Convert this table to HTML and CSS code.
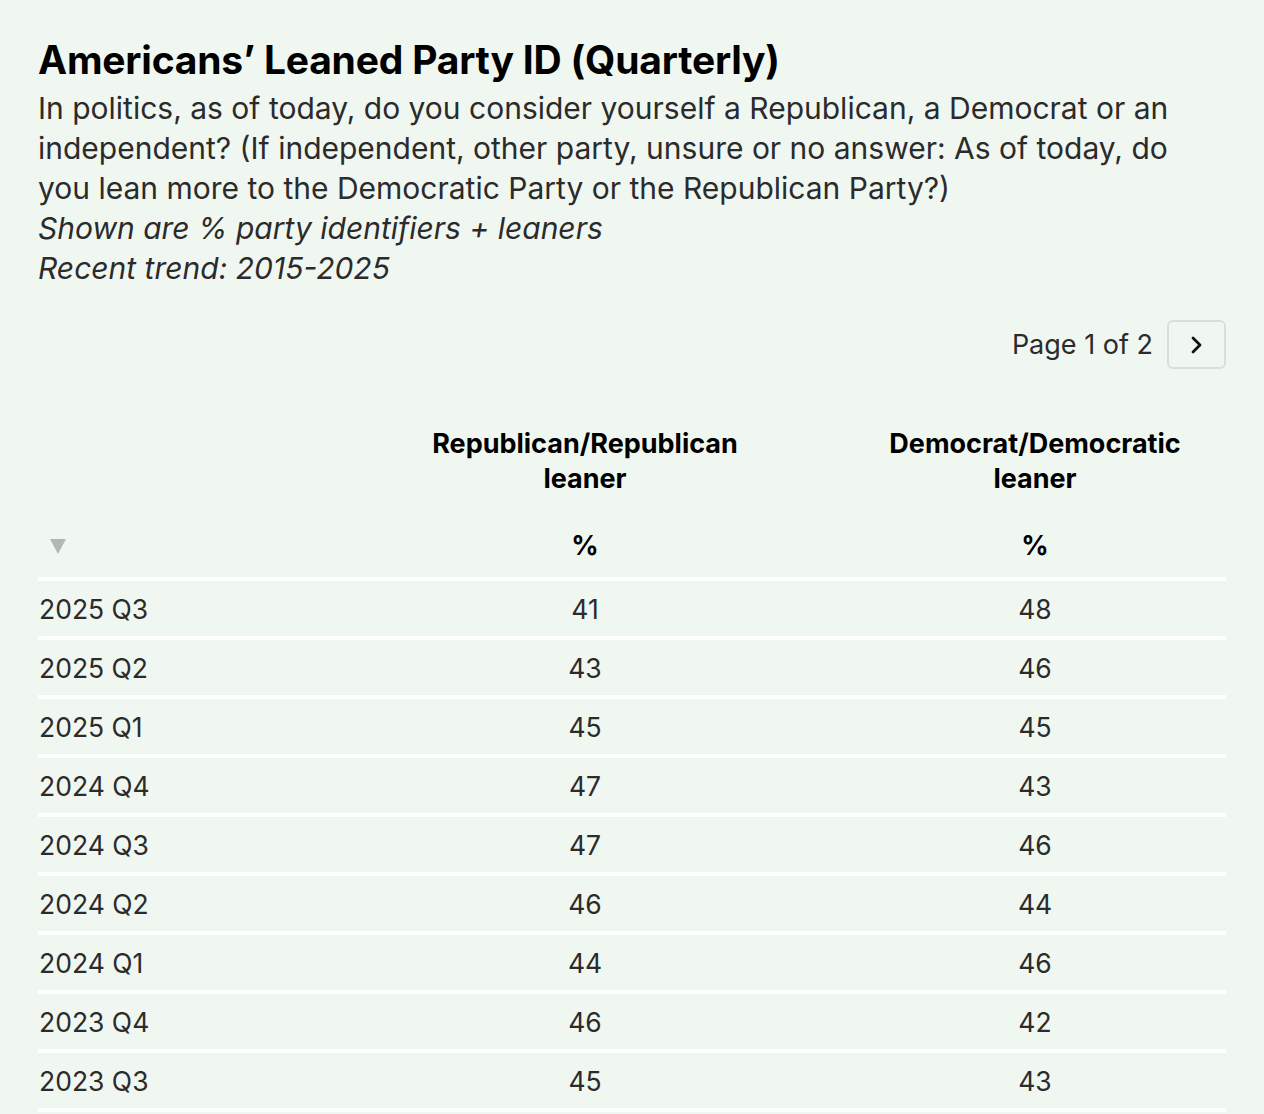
FILE: index.html
```html
<!DOCTYPE html>
<html>
<head>
<meta charset="utf-8">
<link rel="stylesheet" href="styles.css">
</head>
<body>
<div class="page">
  <h1 class="title">Americans’ Leaned Party ID (Quarterly)</h1>
  <p class="question">In politics, as of today, do you consider yourself a Republican, a Democrat or an independent? (If independent, other party, unsure or no answer: As of today, do you lean more to the Democratic Party or the Republican Party?)</p>
  <p class="note">Shown are % party identifiers + leaners</p>
  <p class="note">Recent trend: 2015-2025</p>

  <div class="pager">
    <span class="pager-label">Page 1 of 2</span>
    <button class="pager-btn" aria-label="Next page">
      <svg width="16" height="22" viewBox="0 0 16 22"><path d="M4 4 L11 11 L4 18" fill="none" stroke="#111" stroke-width="2.8" stroke-linecap="round" stroke-linejoin="round"/></svg>
    </button>
  </div>

  <table class="data">
    <colgroup>
      <col class="c1"><col class="c2"><col class="c3">
    </colgroup>
    <thead>
      <tr class="head-names">
        <th></th>
        <th>Republican/Republican<br>leaner</th>
        <th>Democrat/Democratic<br>leaner</th>
      </tr>
      <tr class="head-units">
        <th class="sort"><span class="tri"></span></th>
        <th>%</th>
        <th>%</th>
      </tr>
    </thead>
    <tbody>
      <tr><td>2025 Q3</td><td>41</td><td>48</td></tr>
      <tr><td>2025 Q2</td><td>43</td><td>46</td></tr>
      <tr><td>2025 Q1</td><td>45</td><td>45</td></tr>
      <tr><td>2024 Q4</td><td>47</td><td>43</td></tr>
      <tr><td>2024 Q3</td><td>47</td><td>46</td></tr>
      <tr><td>2024 Q2</td><td>46</td><td>44</td></tr>
      <tr><td>2024 Q1</td><td>44</td><td>46</td></tr>
      <tr><td>2023 Q4</td><td>46</td><td>42</td></tr>
      <tr class="last"><td>2023 Q3</td><td>45</td><td>43</td></tr>
    </tbody>
  </table>
</div>
</body>
</html>
```
FILE: styles.css
```css
html, body {
  margin: 0;
  padding: 0;
  background: #f0f7f0;
}
body {
  font-family: Inter, "Noto Sans", "Liberation Sans", sans-serif;
  color: #2b2b2b;
  overflow: hidden;
}
.page {
  padding: 38px 38px 0 38px;
}
.title {
  margin: 0;
  font-size: 39px;
  line-height: 44px;
  font-weight: 700;
  color: #000;
  letter-spacing: -0.2px;
}
.question {
  margin: 6px 0 0 0;
  font-size: 30px;
  line-height: 40px;
  max-width: 1160px;
}
.note {
  margin: 0;
  font-size: 30px;
  line-height: 40px;
  font-style: italic;
}
.pager {
  display: flex;
  justify-content: flex-end;
  align-items: center;
  gap: 14px;
  margin-top: 32px;
  width: 1188px;
}
.pager-label {
  font-size: 27px;
  color: #2b2b2b;
}
.pager-btn {
  width: 59px;
  height: 49px;
  border: 2px solid #d9ded9;
  border-radius: 6px;
  background: transparent;
  display: flex;
  align-items: center;
  justify-content: center;
  padding: 0;
}
.data {
  margin-top: 57px;
  width: 1188px;
  border-collapse: collapse;
  table-layout: fixed;
}
.c1 { width: 288px; }
.c2 { width: 518px; }
.c3 { width: 382px; }
.data th {
  font-size: 27px;
  font-weight: 700;
  color: #000;
  text-align: center;
  padding: 0;
}
.head-names th {
  line-height: 35px;
  vertical-align: top;
  height: 70px;
}
.head-units th {
  height: 83px;
  line-height: 35px;
  vertical-align: top;
  padding-top: 32px;
  box-sizing: border-box;
}
.data th.sort {
  text-align: left;
}
.tri {
  display: inline-block;
  margin-left: 12px;
  margin-top: 11px;
  width: 0;
  height: 0;
  border-left: 8px solid transparent;
  border-right: 8px solid transparent;
  border-top: 15px solid #b4b8b4;
  vertical-align: top;
}
.data td {
  font-size: 26.5px;
  color: #2b2b2b;
  text-align: center;
  height: 55px;
  padding: 2px 0 0 0;
  box-sizing: border-box;
  border-top: 4px solid #ffffff;
  line-height: 53px;
}
.data tr.last td {
  border-bottom: 4px solid #ffffff;
}
.data td:first-child {
  text-align: left;
  padding-left: 1px;
}
```
